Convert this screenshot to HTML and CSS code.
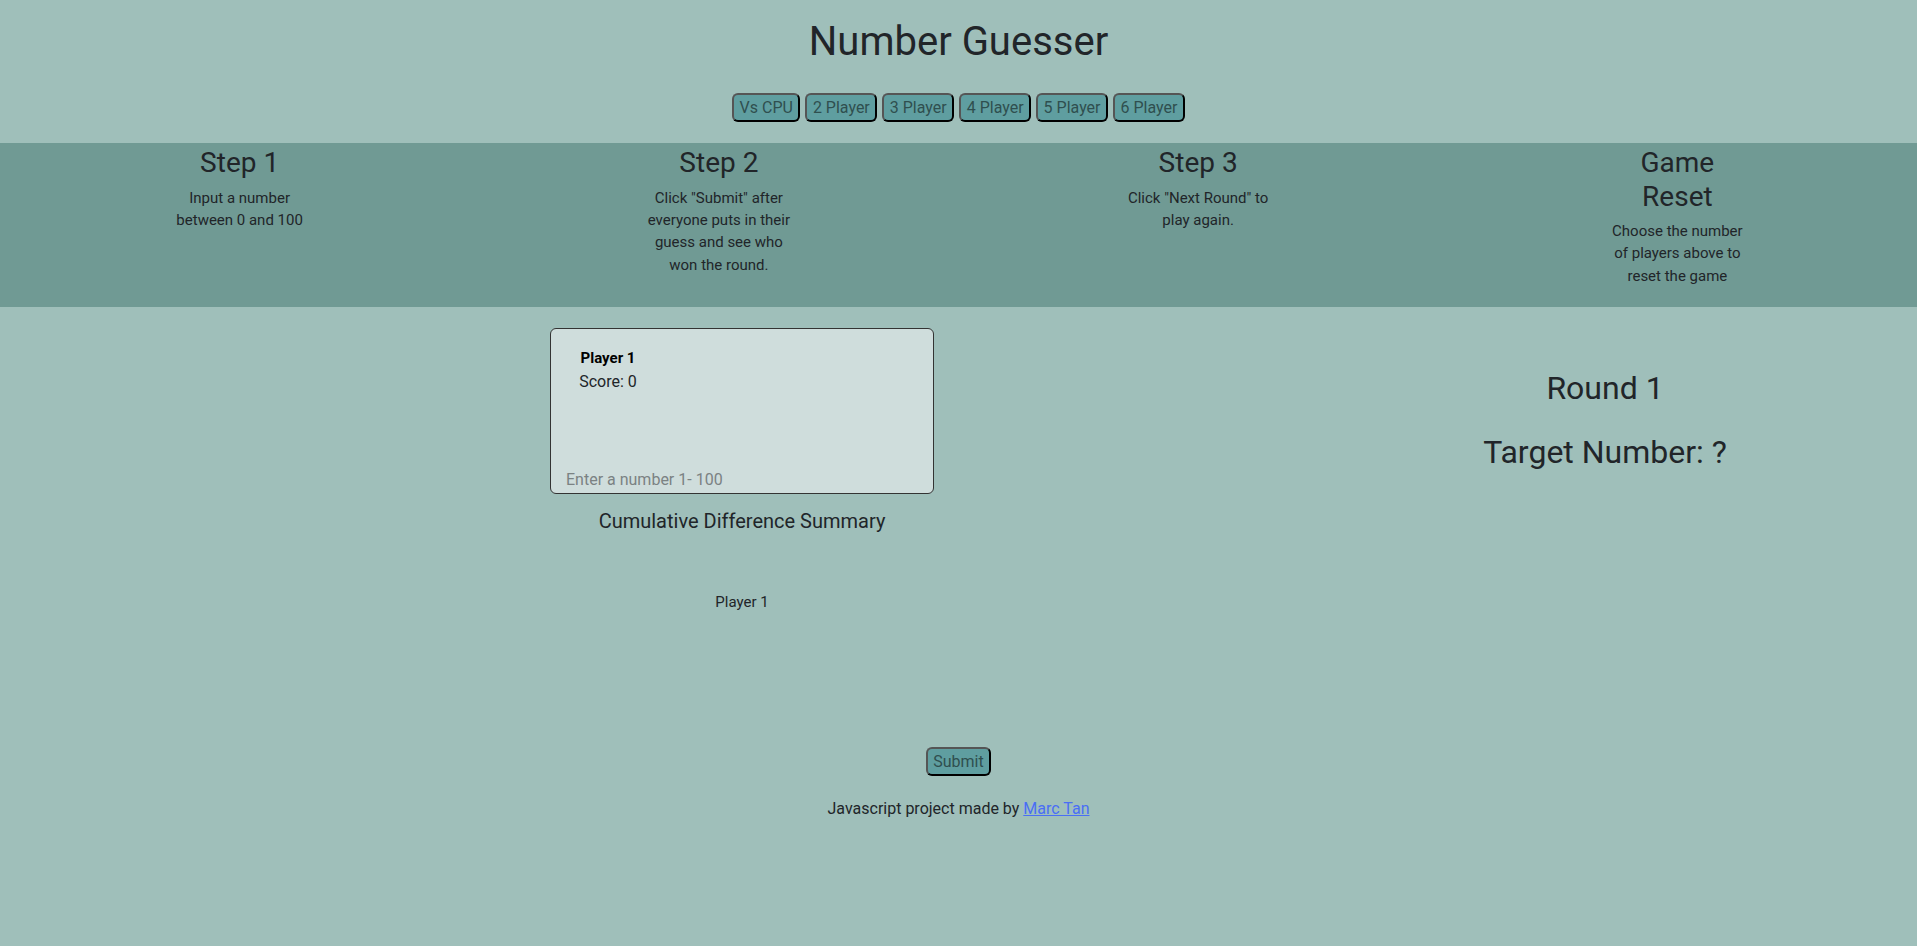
FILE: index.html
```html
<!DOCTYPE html>
<html lang="en">
<head>
<meta charset="utf-8">
<title>Number Guesser</title>
<link rel="stylesheet" href="styles.css">
</head>
<body>
<header class="top">
  <h1 class="title">Number Guesser</h1>
  <nav class="modes">
    <button class="btn">Vs CPU</button>
    <button class="btn">2 Player</button>
    <button class="btn">3 Player</button>
    <button class="btn">4 Player</button>
    <button class="btn">5 Player</button>
    <button class="btn">6 Player</button>
  </nav>
</header>
<section class="steps">
  <div class="step">
    <h3 class="step-title">Step 1</h3>
    <p class="step-text">Input a number between 0 and 100</p>
  </div>
  <div class="step">
    <h3 class="step-title">Step 2</h3>
    <p class="step-text">Click "Submit" after everyone puts in their guess and see who won the round.</p>
  </div>
  <div class="step">
    <h3 class="step-title">Step 3</h3>
    <p class="step-text">Click "Next Round" to play again.</p>
  </div>
  <div class="step">
    <h3 class="step-title">Game Reset</h3>
    <p class="step-text">Choose the number of players above to reset the game</p>
  </div>
</section>
<main class="main">
  <div class="players">
    <div class="card">
      <div class="player-info">
        <div class="player-name">Player 1</div>
        <div class="player-score">Score: 0</div>
      </div>
      <input class="guess" type="text" placeholder="Enter a number 1- 100">
    </div>
    <h4 class="summary-title">Cumulative Difference Summary</h4>
    <div class="summary-row">Player 1</div>
  </div>
  <div class="status">
    <h2 class="status-line">Round 1</h2>
    <h2 class="status-line">Target Number: ?</h2>
  </div>
</main>
<footer class="bottom">
  <button class="btn">Submit</button>
  <p class="credit">Javascript project made by <a class="link" href="#">Marc Tan</a></p>
</footer>
</body>
</html>
```
FILE: styles.css
```css
* { box-sizing: border-box; }
html, body { height: 100%; }
body {
  margin: 0;
  background: #9fbfba;
  color: #212529;
  font-family: Roboto, "Liberation Sans", sans-serif;
  font-size: 16px;
}
.top {
  text-align: center;
  padding: 18px 0 21px;
}
.title {
  margin: 0;
  font-size: 40px;
  line-height: 48px;
  font-weight: 400;
}
.modes {
  margin-top: 27px;
  display: flex;
  justify-content: center;
  gap: 5px;
}
.btn {
  font-family: Roboto, "Liberation Sans", sans-serif;
  font-size: 16px;
  line-height: 19px;
  padding: 3px 5.5px;
  background: #5f9ea0;
  color: #2f4f4f;
  border: 2px solid;
  border-color: #555 #000 #000 #555;
  border-radius: 6px;
  cursor: pointer;
}
.steps {
  background: #709a94;
  display: grid;
  grid-template-columns: repeat(4, 1fr);
  padding: 3px 0 20px;
  text-align: center;
}
.step {
  width: 145px;
  margin: 0 auto;
}
.step-title {
  margin: 0;
  font-size: 28px;
  line-height: 33.5px;
  font-weight: 400;
}
.step-text {
  margin: 7px 0 0;
  font-size: 15px;
  line-height: 22.4px;
}
.main {
  display: grid;
  grid-template-columns: 550px 384px 1fr 624px;
  padding-top: 21px;
}
.players { grid-column: 2; text-align: center; }
.card {
  width: 384px;
  height: 166px;
  border: 1px solid #333;
  border-radius: 6px;
  background: #cfdddc;
  display: flex;
  flex-direction: column;
  justify-content: space-between;
  padding: 17px 0 1px;
  text-align: left;
}
.player-info {
  width: 64px;
  margin-left: 25px;
  text-align: center;
}
.player-name {
  font-size: 15px;
  line-height: 24px;
  font-weight: 700;
  color: #000;
}
.player-score {
  font-size: 16px;
  line-height: 24px;
}
.guess {
  width: 100%;
  border: none;
  background: transparent;
  font-family: Roboto, "Liberation Sans", sans-serif;
  font-size: 16px;
  line-height: 20px;
  padding: 2px 15px;
  color: #212529;
  outline: none;
}
.guess::placeholder { color: #7b8283; }
.summary-title {
  margin: 16px 0 0;
  font-size: 20px;
  line-height: 23px;
  font-weight: 400;
}
.summary-row {
  margin-top: 60px;
  font-size: 15px;
  line-height: 18px;
}
.status {
  grid-column: 4;
  text-align: center;
  padding-top: 41px;
}
.status-line {
  margin: 0 0 26px;
  font-size: 32px;
  line-height: 38px;
  font-weight: 400;
}
.bottom {
  text-align: center;
  margin-top: 136px;
}
.credit {
  margin: 23px 0 0;
  font-size: 16px;
  line-height: 19px;
}
.link { color: #4a6ef5; }
```
